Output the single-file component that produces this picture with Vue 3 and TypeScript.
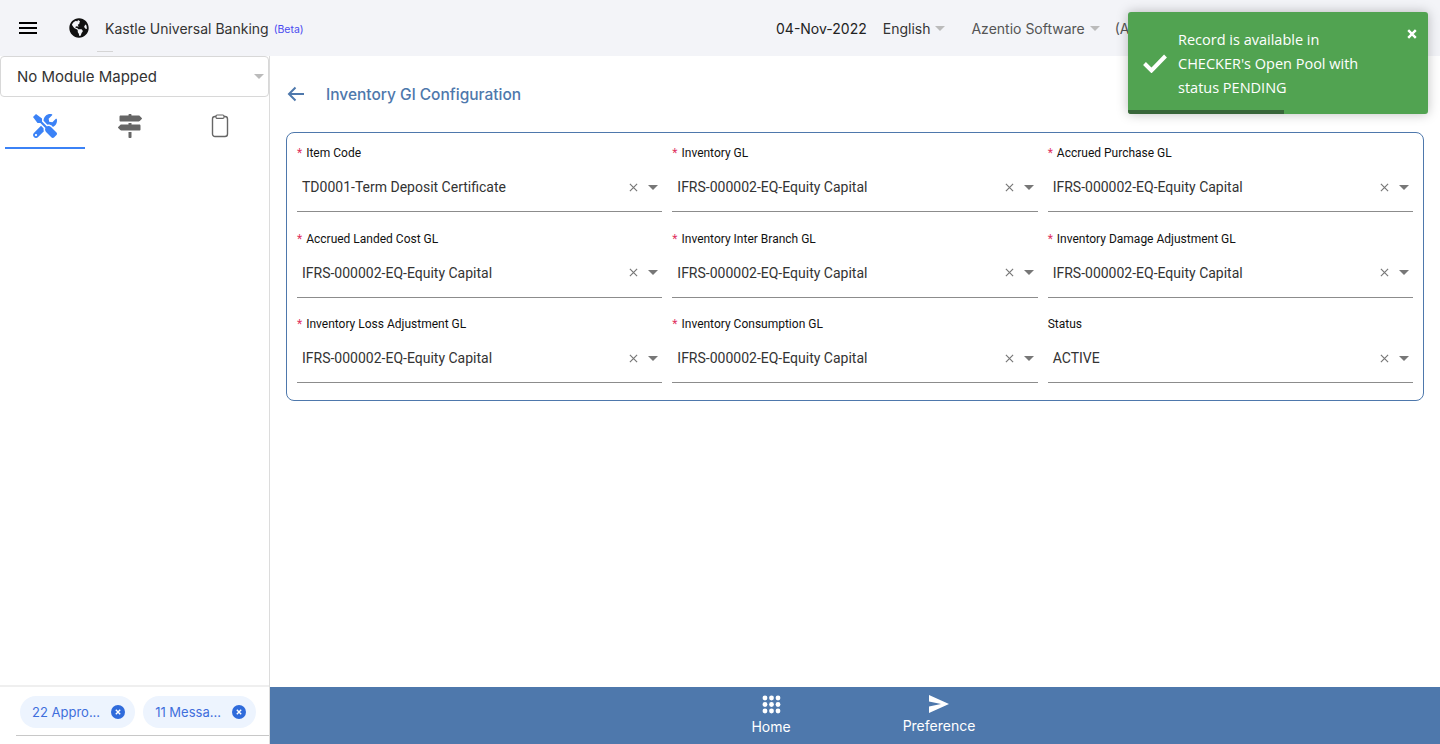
<script setup lang="ts">
interface Field { label: string; value: string; required: boolean }

const fields: Field[] = [
  { label: 'Item Code', value: 'TD0001-Term Deposit Certificate', required: true },
  { label: 'Inventory GL', value: 'IFRS-000002-EQ-Equity Capital', required: true },
  { label: 'Accrued Purchase GL', value: 'IFRS-000002-EQ-Equity Capital', required: true },
  { label: 'Accrued Landed Cost GL', value: 'IFRS-000002-EQ-Equity Capital', required: true },
  { label: 'Inventory Inter Branch GL', value: 'IFRS-000002-EQ-Equity Capital', required: true },
  { label: 'Inventory Damage Adjustment GL', value: 'IFRS-000002-EQ-Equity Capital', required: true },
  { label: 'Inventory Loss Adjustment GL', value: 'IFRS-000002-EQ-Equity Capital', required: true },
  { label: 'Inventory Consumption GL', value: 'IFRS-000002-EQ-Equity Capital', required: true },
  { label: 'Status', value: 'ACTIVE', required: false },
]
const chips = ['22 Appro...', '11 Messa...']
const dots = [0, 1, 2].flatMap(r => [0, 1, 2].map(c => ({ cx: 3 + c * 6.5, cy: 3 + r * 6.5 })))
</script>

<template>
  <div class="page">
    <header class="topbar">
      <svg class="burger" viewBox="0 0 18 14" width="18" height="14"><path d="M0 1h18v2H0zM0 6h18v2H0zM0 11h18v2H0z" fill="#000" /></svg>
      <svg class="globe" viewBox="0 0 496 512" width="20" height="20"><path fill="#111" d="M248 8C111.03 8 0 119.03 0 256s111.03 248 248 248 248-111.03 248-248S384.97 8 248 8zm82.29 357.6c-3.9 3.88-7.99 7.95-11.31 11.28-2.99 3-5.1 6.7-6.17 10.71-1.51 5.66-2.73 11.38-4.77 16.87l-17.39 46.85c-13.76 3-28 4.69-42.65 4.69v-27.38c1.69-12.62-7.64-36.26-22.63-51.25-6-6-9.37-14.14-9.37-22.63v-32.01c0-11.64-6.27-22.34-16.46-27.97-14.37-7.95-34.81-19.06-48.81-26.11-11.48-5.78-22.1-13.14-31.65-21.75l-.8-.72a114.792 114.792 0 0 1-18.06-20.74c-9.38-13.77-24.66-36.42-34.59-51.14 20.47-45.5 57.36-82.04 103.2-101.89l24.01 12.01C203.48 89.74 216 82.01 216 70.11v-11.3c7.99-1.29 16.12-2.11 24.39-2.42l28.3 28.3c6.25 6.25 6.25 16.38 0 22.63L264 112l-10.34 10.34c-3.12 3.12-3.12 8.19 0 11.31l4.69 4.69c3.12 3.12 3.12 8.19 0 11.31l-8 8a8.008 8.008 0 0 1-5.66 2.34h-8.99c-2.08 0-4.08.81-5.58 2.27l-9.92 9.65a8.008 8.008 0 0 0-1.58 9.31l15.59 31.19c2.66 5.32-1.21 11.58-7.15 11.58h-5.64c-1.93 0-3.79-.7-5.24-1.96l-9.28-8.06a16.017 16.017 0 0 0-15.55-3.1l-31.17 10.39a11.95 11.95 0 0 0-8.17 11.34c0 4.53 2.56 8.66 6.61 10.69l11.08 5.54c9.41 4.71 19.79 7.16 30.31 7.16s22.59 27.29 32 32h66.75c8.49 0 16.62 3.37 22.63 9.37l13.69 13.69a30.503 30.503 0 0 1 8.93 21.57 46.536 46.536 0 0 1-13.72 32.98zM417 274.25c-5.79-1.45-10.84-5-14.15-9.97l-17.98-26.97a23.97 23.97 0 0 1 0-26.62l19.59-29.38c2.32-3.47 5.5-6.29 9.24-8.15l12.98-6.49C440.2 193.59 448 223.87 448 256c0 8.67-.74 17.16-1.82 25.54L417 274.25z" /></svg>
      <span class="brand">Kastle Universal Banking</span>
      <span class="beta">(Beta)</span>
      <div class="top-right">
        <span class="date">04-Nov-2022</span>
        <span class="menu lang">English<i class="caret" /></span>
        <span class="menu org">Azentio Software<i class="caret" /></span>
        <span class="menu user">(Admin)</span>
      </div>
      <span class="tick" />
    </header>

    <div class="body">
      <aside class="sidebar">
        <div class="module">
          <span>No Module Mapped</span>
          <i class="caret" />
        </div>
        <nav class="tabs">
          <div class="tab active">
            <svg viewBox="0 0 512 512" width="24" height="24"><path fill="#3b82f6" d="M501.1 395.7L384 278.6c-23.1-23.1-57.6-27.6-85.4-13.9L192 158.1V96L64 0 0 64l96 128h62.1l106.6 106.6c-13.6 27.8-9.2 62.3 13.9 85.4l117.1 117.1c14.6 14.6 38.2 14.6 52.7 0l52.7-52.7c14.5-14.6 14.5-38.2 0-52.7zM331.7 225c28.3 0 54.9 11 74.9 31l19.4 19.4c15.8-6.9 30.8-16.5 43.8-29.5 37.1-37.1 49.7-89.3 37.9-136.7-2.2-9-13.5-12.1-20.1-5.5l-74.4 74.4-67.9-11.3L334 98.9l74.4-74.4c6.6-6.6 3.4-17.9-5.7-20.2-47.4-11.7-99.6.9-136.6 37.9-28.5 28.5-41.9 66.1-41.2 103.6l82.1 82.1c8.1-1.9 16.5-2.9 24.7-2.9zm-103.9 82l-56.7-56.7L18.7 402.8c-25 25-25 65.5 0 90.5s65.5 25 90.5 0l123.6-123.6c-7.6-19.9-9.9-41.6-5-62.7zM64 472c-13.2 0-24-10.8-24-24 0-13.3 10.7-24 24-24s24 10.7 24 24c0 13.2-10.7 24-24 24z" /></svg>
          </div>
          <div class="tab">
            <svg viewBox="0 0 512 512" width="24" height="24"><path fill="#666" d="M507.31 84.69L464 41.37c-6-6-14.14-9.37-22.63-9.37H288V16c0-8.84-7.16-16-16-16h-32c-8.84 0-16 7.16-16 16v16H56c-13.25 0-24 10.75-24 24v80c0 13.25 10.75 24 24 24h385.37c8.49 0 16.62-3.37 22.63-9.37l43.31-43.31c6.25-6.26 6.25-16.38 0-22.63zM224 496c0 8.84 7.16 16 16 16h32c8.84 0 16-7.16 16-16V384h-64v112zm232-272H288v-32h-64v32H70.63c-8.49 0-16.62 3.37-22.63 9.37L4.69 276.69c-6.25 6.25-6.25 16.38 0 22.63L48 342.63c6 6 14.14 9.37 22.63 9.37H456c13.25 0 24-10.75 24-24v-80c0-13.25-10.75-24-24-24z" /></svg>
          </div>
          <div class="tab">
            <svg viewBox="0 0 18 24" width="18" height="24"><rect x="1.5" y="2.5" width="15" height="20" rx="2.5" fill="none" stroke="#666" stroke-width="1.4" /><rect x="5" y="1" width="8" height="3.4" rx="1.2" fill="#fff" stroke="#666" stroke-width="1.2" /></svg>
          </div>
        </nav>
        <div class="spacer" />
        <div class="chips">
          <span v-for="c in chips" :key="c" class="chip">
            {{ c }}
            <svg viewBox="0 0 14 14" width="14" height="14"><circle cx="7" cy="7" r="7" fill="#2f6bdb" /><path d="M4.8 4.8l4.4 4.4M9.2 4.8l-4.4 4.4" stroke="#fff" stroke-width="1.4" /></svg>
          </span>
        </div>
        <div class="chips-rule" />
      </aside>

      <main class="main">
        <div class="content">
          <div class="title-row">
            <svg viewBox="0 0 18 16" width="18" height="16"><path d="M17 8H2M8.5 1.5L2 8l6.5 6.5" fill="none" stroke="#4e78ac" stroke-width="2" /></svg>
            <h1>Inventory Gl Configuration</h1>
          </div>
          <section class="card">
            <div v-for="f in fields" :key="f.label" class="field">
              <label><span v-if="f.required" class="req">*</span>{{ f.label }}</label>
              <div class="select">
                <span class="value">{{ f.value }}</span>
                <svg class="clear" viewBox="0 0 10 10" width="9" height="9"><path d="M1 1l8 8M9 1L1 9" stroke="#777" stroke-width="1.3" /></svg>
                <i class="arrow" />
              </div>
            </div>
          </section>
        </div>
        <footer class="dock">
          <div class="dock-item home">
            <svg viewBox="0 0 19 19" width="19" height="19"><circle v-for="d in dots" :key="d.cx + '-' + d.cy" :cx="d.cx" :cy="d.cy" r="2.4" fill="#fff" /></svg>
            <span>Home</span>
          </div>
          <div class="dock-item pref">
            <svg viewBox="0 0 20 18" width="20" height="18"><path d="M0 0l20 9-20 9v-6.5L12 9 0 6.5z" fill="#fff" /></svg>
            <span>Preference</span>
          </div>
        </footer>
      </main>
    </div>

    <div class="toast">
      <svg class="check" viewBox="0 0 26 20" width="26" height="20"><path d="M2.5 10.5l7 7L23.5 3" fill="none" stroke="#fff" stroke-width="4" /></svg>
      <p>Record is available in CHECKER's Open Pool with status PENDING</p>
      <svg class="close" viewBox="0 0 10 10" width="10" height="10"><path d="M1.2 1.2l7.6 7.6M8.8 1.2L1.2 8.8" stroke="#fff" stroke-width="2.4" /></svg>
      <div class="progress" />
    </div>
  </div>
</template>

<style>
html, body { margin: 0; background: #fff; overflow: hidden; }
</style>

<style scoped>
.page {
  position: relative;
  width: 1440px; height: 744px;
  display: flex; flex-direction: column;
  font-family: Roboto, "Liberation Sans", sans-serif;
  overflow: hidden;
}
.topbar {
  position: relative;
  height: 56px; flex-shrink: 0;
  display: flex; align-items: center;
  background: #f3f4f8;
  padding-left: 19px;
  box-sizing: border-box;
}
.burger { margin-right: 32px; }
.globe { margin-right: 16px; }
.brand { font-family: Inter, sans-serif; font-size: 14px; color: #333; }
.beta { font-family: Inter, sans-serif; font-size: 10.5px; color: #4a4af0; margin-left: 5px; margin-top: 2px; }
.top-right {
  margin-left: auto;
  display: flex; align-items: center;
  font-family: Inter, sans-serif; font-size: 14px;
  width: 664px; box-sizing: border-box;
}
.date { color: #222; margin-right: 16px; }
.menu { display: inline-flex; align-items: center; color: #555; }
.lang { color: #333; margin-right: 26px; }
.org { margin-right: 15px; }
.caret {
  display: inline-block;
  width: 0; height: 0;
  margin-left: 5px;
  border-left: 5px solid transparent;
  border-right: 5px solid transparent;
  border-top: 5px solid #bbb;
}
.tick { position: absolute; left: 97px; bottom: 4px; width: 16px; height: 1px; background: #d5d5d5; }

.body { flex: 1; display: flex; min-height: 0; }
.sidebar {
  width: 270px; flex-shrink: 0;
  box-sizing: border-box;
  border-right: 1px solid #dcdcdc;
  display: flex; flex-direction: column;
}
.module {
  height: 41px;
  box-sizing: border-box;
  border: 1px solid #d8d8d8; border-radius: 4px;
  display: flex; align-items: center; justify-content: space-between;
  padding: 0 4px 0 16px;
  font-family: Inter, sans-serif; font-size: 15px; color: #333;
}
.tabs { display: grid; grid-template-columns: 80px 90px 90px; padding-left: 5px; margin-top: 13px; }
.tab { height: 39px; display: flex; justify-content: center; padding-top: 4px; box-sizing: border-box; }
.tab.active { border-bottom: 2px solid #3b82f6; }
.tab:nth-child(3) { padding-right: 0; }
.spacer { flex: 1; border-bottom: 2px solid #efefef; }
.chips { display: flex; gap: 8px; padding: 9px 0 7px 20px; }
.chip {
  height: 32px;
  display: inline-flex; align-items: center; gap: 11px;
  padding: 0 10px 0 12px;
  border-radius: 16px;
  background: #edf4fe;
  font-family: Inter, sans-serif; font-size: 13px; color: #3f6fdc;
}
.chips-rule { margin-left: 16px; height: 1px; background: #c8c8c8; margin-bottom: 8px; }

.main { flex: 1; min-width: 0; display: flex; flex-direction: column; }
.content { flex: 1; padding: 0 16px 0 16px; }
.title-row { height: 76px; display: flex; align-items: center; gap: 21px; padding-left: 1px; }
h1 { margin: 0; font-family: Inter, sans-serif; font-size: 15.5px; font-weight: 500; color: #4e78ac; }
.card {
  display: grid;
  grid-template-columns: repeat(3, 1fr);
  column-gap: 10px;
  row-gap: 16.5px;
  border: 1px solid #4e78ac; border-radius: 8px;
  padding: 10px 10px 31px;
  box-sizing: border-box;
  height: 269px;
  align-content: start;
}
.field { height: 69px; display: flex; flex-direction: column; }
label { font-size: 12px; line-height: 20px; color: #111; }
.req { color: #e0325f; margin-right: 4px; }
.select {
  flex: 1;
  display: flex; align-items: center;
  padding-left: 5px;
  border-bottom: 1px solid #8c8c8c;
  font-size: 14px; color: #333;
}
.value { flex: 1; }
.clear { margin-right: 10px; }
.arrow {
  width: 0; height: 0;
  margin-right: 4px;
  border-left: 5px solid transparent;
  border-right: 5px solid transparent;
  border-top: 5px solid #777;
}
.dock {
  height: 57px; flex-shrink: 0;
  background: #4e78ac;
  display: flex;
  color: #fff;
  font-family: Inter, sans-serif; font-size: 14px;
  padding-left: 461px;
}
.dock-item { display: flex; flex-direction: column; align-items: center; padding-top: 8px; gap: 4px; }
.home { width: 80px; }
.pref { width: 80px; margin-left: 88px; }

.toast {
  position: absolute;
  left: 1128px; top: 12px;
  width: 300px; height: 102px;
  box-sizing: border-box;
  background: #51a351;
  border-radius: 3px;
  box-shadow: 0 0 12px rgba(0, 0, 0, .25);
  color: #fff;
  padding: 16px 40px 0 50px;
  font-family: "Open Sans", sans-serif; font-size: 14.5px; line-height: 24px;
  overflow: hidden;
}
p { margin: 0; }
.check { position: absolute; left: 14px; top: 41px; }
.close { position: absolute; right: 11px; top: 17px; }
.progress { position: absolute; left: 0; bottom: 0; width: 156px; height: 4px; background: #38663a; }
</style>
